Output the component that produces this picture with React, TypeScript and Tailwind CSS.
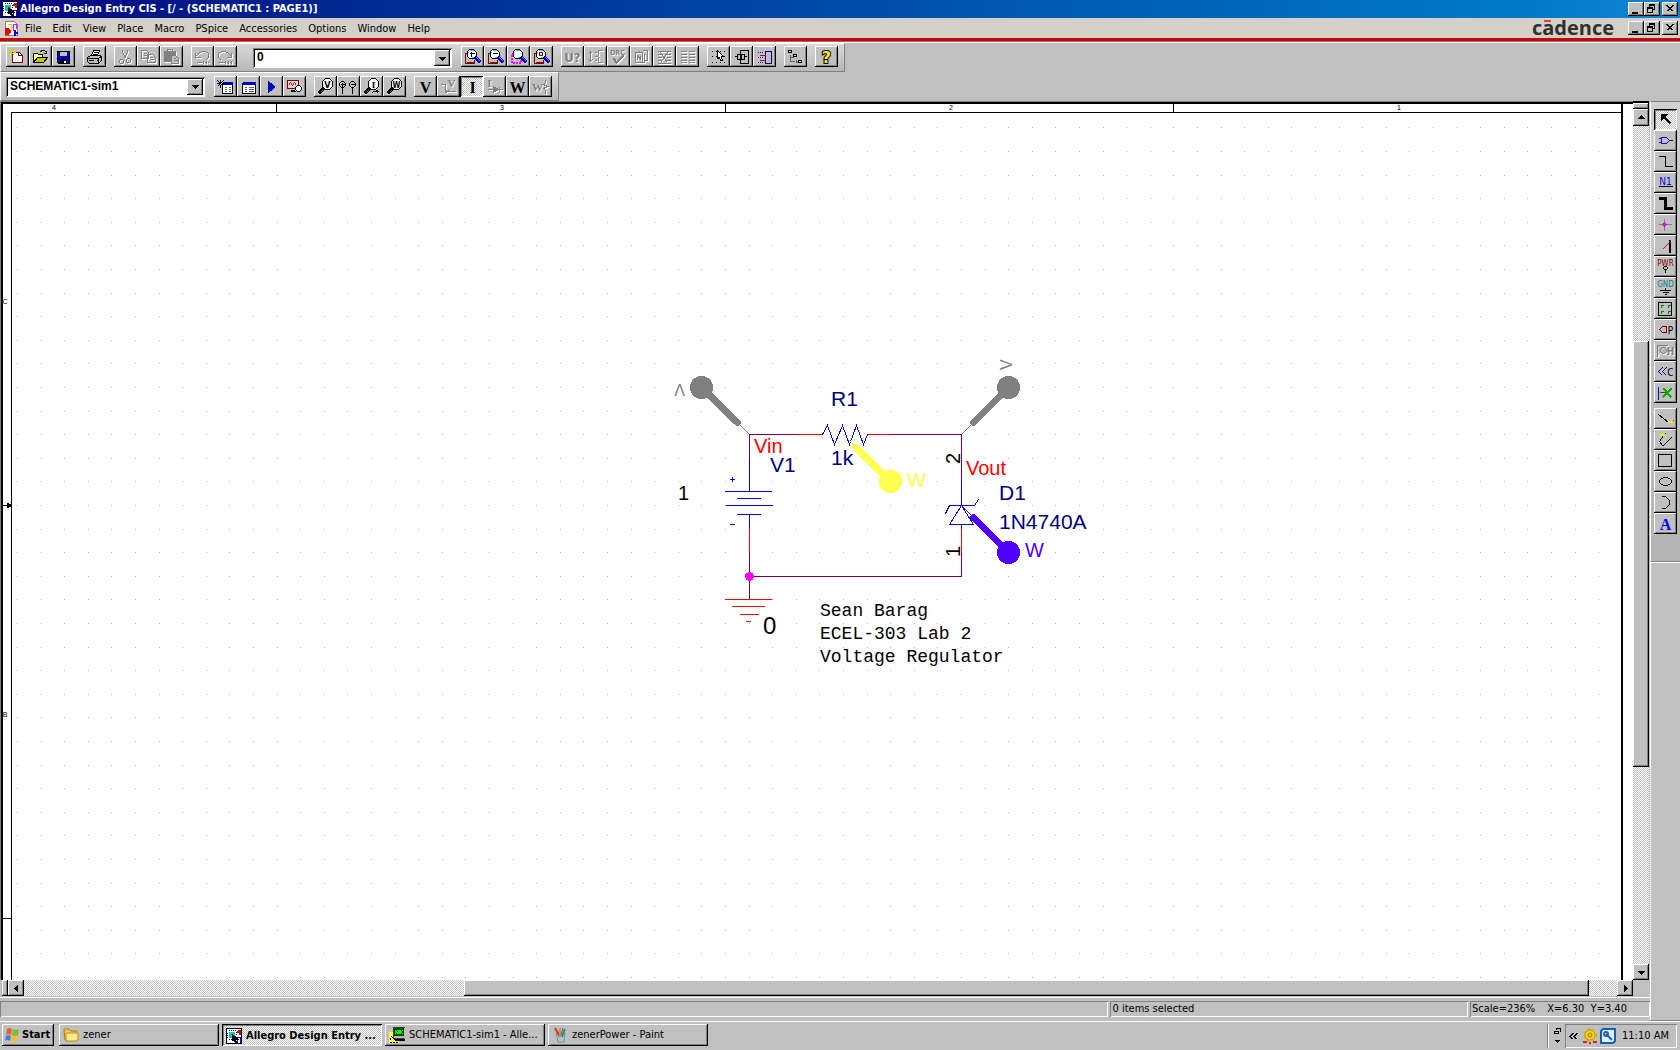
import React from "react";
import type { ReactNode } from "react";

const CHECKER =
  "bg-[repeating-conic-gradient(#ffffff_0_25%,#c0c0c0_0_50%)] bg-[length:2px_2px]";
const RAISED =
  "bg-[#c0c0c0] shadow-[inset_-1px_-1px_0_#000,inset_1px_1px_0_#fff,inset_-2px_-2px_0_#808080]";
const PRESSED =
  "shadow-[inset_1px_1px_0_#000,inset_-1px_-1px_0_#fff,inset_2px_2px_0_#808080]";
const SUNKEN =
  "shadow-[inset_1px_1px_0_#808080,inset_-1px_-1px_0_#fff,inset_2px_2px_0_#000]";
const THIN_SUNKEN = "shadow-[inset_1px_1px_0_#808080,inset_-1px_-1px_0_#fff]";

/* Integer coordinates fall on pixel centres inside this 23x21 icon surface. */
function Icon({ children }: { children: ReactNode }) {
  return (
    <svg
      aria-hidden="true"
      width="23"
      height="21"
      viewBox="-0.5 -0.5 23 21"
      fill="none"
      stroke="#000"
      shapeRendering="crispEdges"
      className="block shrink-0"
    >
      {children}
    </svg>
  );
}

/* Embossed look of an unavailable command. */
function Dim({ children }: { children: ReactNode }) {
  return (
    <>
      <g className="text-white" stroke="currentColor" transform="translate(1 1)">
        {children}
      </g>
      <g className="text-[#808080]" stroke="currentColor">
        {children}
      </g>
    </>
  );
}

type GlyphProps = {
  x: number;
  y: number;
  size: number;
  fill?: string;
  serif?: boolean;
  bold?: boolean;
  children: string;
};

function Glyph({ x, y, size, fill = "currentColor", serif, bold = true, children }: GlyphProps) {
  return (
    <text
      x={x}
      y={y}
      fontSize={size}
      fill={fill}
      stroke="none"
      textAnchor="middle"
      fontWeight={bold ? 700 : 400}
      fontFamily={
        serif ? '"Liberation Serif", serif' : '"DejaVu Sans Condensed", "DejaVu Sans", sans-serif'
      }
    >
      {children}
    </text>
  );
}

type Tool = { label: string; icon: ReactNode; off?: boolean; on?: boolean };

function ToolButton({ label, icon, off, on }: Tool) {
  return (
    <button
      type="button"
      aria-label={label}
      aria-pressed={on}
      disabled={off}
      className={`h-[21px] w-[23px] shrink-0 ${on ? `${CHECKER} ${PRESSED}` : RAISED}`}
    >
      <Icon>{icon}</Icon>
    </button>
  );
}

function Group({ tools, vertical }: { tools: Tool[]; vertical?: boolean }) {
  return (
    <div className={vertical ? "flex flex-col" : "flex"}>
      {tools.map((t) => (
        <ToolButton key={t.label} {...t} />
      ))}
    </div>
  );
}

const Lens = ({ children, page = true }: { children?: ReactNode; page?: boolean }) => (
  <>
    {page && <path d="M7 7H4V17H13V13M5 16H12" stroke="#800000" />}
    <path d="M14 11L19 16" stroke="#0000c0" strokeWidth="3" />
    <path d="M15 11L19 15" stroke="#8080ff" />
    <path d="M8 3H12L15 6V9L12 12H8L6 10V5Z" fill="#fff" />
    <path d="M8 4H12M7 5V6M12 11H10" stroke="#00e0e0" />
    {children}
  </>
);

const Probe = ({ children }: { children: ReactNode }) => (
  <>
    <path d="M9 12L4 17" strokeWidth="3" />
    <path d="M10 12L4 18" stroke="#606060" strokeDasharray="1 1" />
    <path d="M11 2H15L18 5V10L15 13H11L8 10V5Z" fill="#fff" />
    {children}
  </>
);

const Star = ({ x, y, c }: { x: number; y: number; c: string }) => (
  <path
    transform={`translate(${x} ${y})`}
    stroke={c}
    d="M-4 0H-1M1 0H4M0 -4V-1M0 1V4M-3 -3L3 3M-3 3L3 -3"
  />
);

const fileTools: Tool[] = [
  {
    label: "Create document",
    icon: (
      <>
        <path d="M6 6H13L16 9V16H6Z" fill="#fff" stroke="#800000" />
        <path d="M12 6V9H16" stroke="#800000" />
        <Star x={5} y={6} c="#e0d000" />
      </>
    ),
  },
  {
    label: "Open document",
    icon: (
      <>
        <path d="M4 15V7H8L9 8H13V10" fill="#ffff80" />
        <path d="M4 16L8 11H18L14 16Z" fill="#c8c800" />
        <path d="M11 5L13 4H15L17 6M17 4V7H14" />
      </>
    ),
  },
  {
    label: "Save document",
    icon: (
      <>
        <path d="M5 5H17V17H6L5 16Z" fill="#0000c0" />
        <path d="M8 6H14V9H8Z" fill="#c0c0c0" stroke="#c0c0c0" />
        <path d="M8 13H14V16H8Z" fill="#000" />
        <path d="M12 14V16" stroke="#fff" strokeWidth="2" />
      </>
    ),
  },
];

const printTools: Tool[] = [
  {
    label: "Print",
    icon: (
      <>
        <path d="M8 9L10 4H16L14 9Z" fill="#fff" />
        <path d="M10 6H14M9 8H13" />
        <path d="M4 11L7 9H16L18 10V14L15 17H6L4 15Z" fill="#c0c0c0" />
        <path d="M4 12H15L18 10M15 12V17M5 14H14" />
        <path d="M10 14H13" stroke="#e0e000" />
      </>
    ),
  },
];

const editTools: Tool[] = [
  {
    label: "Cut",
    off: true,
    icon: (
      <Dim>
        <path d="M8 3V6L12 12M13 3V6L9 12M6 13H8L9 14V16L8 17H6L5 16V14ZM13 12H15L16 13V15L15 16H13L12 15V13Z" />
      </Dim>
    ),
  },
  {
    label: "Copy",
    off: true,
    icon: (
      <Dim>
        <path d="M4 4H9L11 6V12H4ZM6 7H9M6 9H9M10 8H15L18 11V16H10ZM12 11H15M12 13H16" />
      </Dim>
    ),
  },
  {
    label: "Paste",
    off: true,
    icon: (
      <Dim>
        <path d="M4 5H15V15H4Z" fill="currentColor" />
        <path d="M7 3H12V5H7Z" />
        <path d="M11 9H15L18 12V17H11Z" fill="#c0c0c0" />
        <path d="M13 12H15M13 14H17" />
      </Dim>
    ),
  },
];

const undoTools: Tool[] = [
  {
    label: "Undo",
    off: true,
    icon: (
      <Dim>
        <path d="M4 6V11H9M4 10L8 6L11 5H14L17 7V11L14 14M5 16H11M13 16H14M16 16H17M12 14V17M15 14V17" />
      </Dim>
    ),
  },
  {
    label: "Redo",
    off: true,
    icon: (
      <Dim>
        <path d="M17 6V11H12M17 10L13 6L10 5H7L4 7V11L7 14M4 16H10M12 16H13M15 16H16M11 14V17M14 14V17M17 14V17" />
      </Dim>
    ),
  },
];

const zoomTools: Tool[] = [
  { label: "Zoom in", icon: <Lens><path d="M8 7H13M10 5V10" /></Lens> },
  { label: "Zoom out", icon: <Lens><path d="M8 7H13" /></Lens> },
  {
    label: "Zoom to region",
    icon: (
      <>
        <path d="M4 7H13V16H4Z" stroke="#ff00ff" strokeWidth="2" strokeDasharray="2 1" />
        <Lens page={false} />
      </>
    ),
  },
  { label: "Zoom to all", icon: <Lens><path d="M9 6H12V9H9Z" stroke="#800000" /></Lens> },
];

const processTools: Tool[] = [
  {
    label: "Annotate",
    off: true,
    icon: <Dim><Glyph x={11} y={15} size={13}>U?</Glyph></Dim>,
  },
  {
    label: "Back annotate",
    off: true,
    icon: (
      <Dim>
        <path d="M6 5V15M4 7L6 5L8 7M4 13L6 15L8 13M10 6H12M10 10H12M10 14H12M18 4H14V9L13 10L14 11V16H18" />
      </Dim>
    ),
  },
  {
    label: "Design rules check",
    off: true,
    icon: (
      <Dim>
        <Glyph x={10} y={8} size={7}>DRC</Glyph>
        <path d="M6 12L9 16L16 9" strokeWidth="2" />
      </Dim>
    ),
  },
  {
    label: "Create netlist",
    off: true,
    icon: (
      <Dim>
        <path d="M5 6H12V16H5ZM12 4H17V14H14M9 4V6M14 7V16H12" />
        <path d="M7 13V9L10 13V9" strokeWidth="1" />
      </Dim>
    ),
  },
  {
    label: "Cross reference parts",
    off: true,
    icon: (
      <Dim>
        <path d="M4 5H17M4 8H8M13 8H17M4 11H8M13 11H17M4 14H8M13 14H17M4 17H17" />
        <path d="M7 6L14 16M14 6L7 16" />
      </Dim>
    ),
  },
  {
    label: "Bill of materials",
    off: true,
    icon: (
      <Dim>
        <path d="M4 5H10M12 5H18M4 8H10M12 8H18M4 11H10M12 11H18M4 14H10M12 14H18M4 16H10M12 16H18" />
      </Dim>
    ),
  },
];

const snapTools: Tool[] = [
  {
    label: "Snap to grid",
    icon: (
      <>
        <path d="M4 5H18M4 10H18M4 16H18" strokeDasharray="1 3" />
        <path d="M10 4L16 10H14L15 14H13L12 11L10 12Z" fill="#fff" />
      </>
    ),
  },
  {
    label: "Area select",
    icon: (
      <>
        <path d="M10 4H18V17H10Z" />
        <path d="M7 8H14V13H7ZM4 10H7M14 10H16M11 8V13" />
      </>
    ),
  },
  {
    label: "Drag connected object",
    icon: (
      <>
        <path d="M12 5H18V17H12Z" stroke="#000080" />
        <path d="M6 9H12M6 14H12" stroke="#c00000" />
        <path d="M4 6H10M4 11H10M4 16H10" stroke="#0000ff" strokeDasharray="1 1" />
      </>
    ),
  },
];

const managerTools: Tool[] = [
  {
    label: "Project manager",
    icon: (
      <>
        <path d="M6 8V15H10M6 11H9M12 13V16H15" stroke="#606060" />
        <path d="M4 4H7V6H4ZM9 8H12V10H9ZM14 14H17V16H14Z" fill="#ffff00" />
      </>
    ),
  },
];

const helpTools: Tool[] = [
  {
    label: "Help topics",
    icon: (
      <text
        x="11"
        y="16"
        textAnchor="middle"
        fontSize="16"
        fontWeight="700"
        fontFamily='"DejaVu Sans", sans-serif'
        fill="#ffee00"
        stroke="#000"
        strokeWidth="2"
        paintOrder="stroke"
      >
        ?
      </text>
    ),
  },
];

const SimWindow = ({ x }: { x: number }) => (
  <>
    <path d={`M${x} 7H18V17H${x}Z`} fill="#fff" />
    <path d={`M${x} 7H18`} stroke="#0000c0" strokeWidth="3" />
    <path d={`M${x + 2} 11H${x + 4}M${x + 6} 11H16M${x + 2} 13H${x + 4}M${x + 6} 13H16M${x + 2} 15H${x + 4}M${x + 6} 15H16`} stroke="#606060" />
  </>
);

const simTools: Tool[] = [
  { label: "New simulation profile", icon: <><SimWindow x={8} /><Star x={6} y={7} c="#000" /></> },
  { label: "Edit simulation profile", icon: <SimWindow x={5} /> },
  {
    label: "Run PSpice",
    icon: <path d="M8 5V16L14 11V10Z" fill="#0000d0" stroke="#0000a0" />,
  },
  {
    label: "View simulation results",
    icon: (
      <>
        <path d="M4 4H15V12H4Z" fill="#d8d8d8" stroke="#800000" />
        <path d="M5 9L7 6L9 9L11 6L13 9" stroke="#ff0000" />
        <path d="M8 15L12 14" strokeWidth="2" />
        <path d="M14 9H16L18 11V13L16 15H14L12 13V11Z" fill="#fff" />
      </>
    ),
  },
];

const markerTools: Tool[] = [
  { label: "Voltage level marker", icon: <Probe><Glyph x={13} y={11} size={9} fill="#000">V</Glyph></Probe> },
  {
    label: "Voltage differential markers",
    icon: (
      <>
        <path d="M4 5H6L8 7V9L6 11H4L2 9V7ZM5 11V17M3 8H7M5 6V10" />
        <path d="M14 5H16L18 7V9L16 11H14L12 9V7ZM15 11V17M13 8H17" />
      </>
    ),
  },
  {
    label: "Current marker",
    icon: (
      <Probe>
        <Glyph x={13} y={11} size={9} serif fill="#000">I</Glyph>
        <path d="M11 17L13 15H17M15 13L18 15L16 17" />
      </Probe>
    ),
  },
  { label: "Power dissipation marker", icon: <Probe><Glyph x={13} y={11} size={8} fill="#000">W</Glyph></Probe> },
];

const biasTools: Tool[] = [
  { label: "Enable bias voltage display", icon: <Glyph x={11} y={16} size={16} serif fill="#000">V</Glyph> },
  {
    label: "Toggle voltage on selected net",
    off: true,
    icon: (
      <Dim>
        <Glyph x={14} y={10} size={11} serif>V</Glyph>
        <path d="M3 8H8V15H18M12 13L10 15" />
        <path d="M7 15H9" strokeWidth="3" />
      </Dim>
    ),
  },
  { label: "Enable bias current display", on: true, icon: <Glyph x={12} y={16} size={16} serif fill="#000">I</Glyph> },
  {
    label: "Toggle current on selected part",
    off: true,
    icon: (
      <Dim>
        <Glyph x={6} y={10} size={11} serif>I</Glyph>
        <path d="M4 13H19M16 10V16" />
        <path d="M10 10V16L15 13Z" fill="currentColor" />
      </Dim>
    ),
  },
  { label: "Enable bias power display", icon: <Glyph x={11} y={16} size={16} serif fill="#000">W</Glyph> },
  {
    label: "Toggle power on selected part",
    off: true,
    icon: (
      <Dim>
        <Glyph x={8} y={14} size={11} serif>W</Glyph>
        <path d="M16 3V6L14 8L18 10L14 12L16 14V17" />
      </Dim>
    ),
  },
];

const drawTools: Tool[] = [
  {
    label: "Select",
    on: true,
    icon: <><path d="M7 5H13L7 11Z" fill="#000" /><path d="M9 7L16 14" strokeWidth="2" /></>,
  },
  {
    label: "Place part",
    icon: (
      <>
        <path d="M4 8H7M4 12H7M15 10H18" stroke="#800000" />
        <path d="M7 7H12L15 10L12 13H7Z" stroke="#0000ff" />
      </>
    ),
  },
  { label: "Place wire", icon: <path d="M4 5H11V15H18" /> },
  {
    label: "Place net alias",
    icon: <><Glyph x={11} y={12} size={10} bold={false} fill="#0000ff">N1</Glyph><path d="M4 14H18" /></>,
  },
  { label: "Place bus", icon: <path d="M4 5H11V15H18" strokeWidth="3" /> },
  {
    label: "Place junction",
    icon: (
      <>
        <path d="M4 10H17M10 4V16" stroke="#808080" />
        <path d="M8 10L10 8L12 10L10 12Z" fill="#ff00ff" stroke="#c000c0" />
      </>
    ),
  },
  {
    label: "Place bus entry",
    icon: <><path d="M8 14L14 8" stroke="#ff0000" /><path d="M15 4V17" strokeWidth="2" /></>,
  },
  {
    label: "Place power",
    icon: <><Glyph x={11} y={9} size={8} bold={false} fill="#800000">PWR</Glyph><path d="M10 10H12L13 11V12L12 13H10L9 12V11ZM11 13V16" /></>,
  },
  {
    label: "Place ground",
    icon: <><Glyph x={11} y={9} size={8} bold={false} fill="#008080">GND</Glyph><path d="M11 10V13M5 13H16M8 15H14M10 17H12" /></>,
  },
  {
    label: "Place hierarchical block",
    icon: (
      <>
        <path d="M4 4H17V17H4Z" />
        <path d="M6 7H9M7 6V9M13 7H16M14 6V9M6 13H9M7 12V15M13 13H16M14 12V15" stroke="#008000" />
      </>
    ),
  },
  {
    label: "Place port",
    icon: <><path d="M5 10L8 7H12V13H8Z" stroke="#800000" /><Glyph x={16} y={14} size={10} bold={false} fill="#000">P</Glyph></>,
  },
  {
    label: "Place pin",
    off: true,
    icon: (
      <Dim>
        <path d="M3 16V5H13M5 10L8 7H10L13 10L10 13H8Z" fill="currentColor" fillOpacity="0.4" />
        <Glyph x={16} y={14} size={10}>H</Glyph>
      </Dim>
    ),
  },
  {
    label: "Place off-page connector",
    icon: <><path d="M8 6L4 10L8 14M12 6L8 10L12 14" stroke="#0000a0" /><Glyph x={16} y={14} size={10} bold={false} fill="#000">C</Glyph></>,
  },
  {
    label: "Place no connect",
    icon: (
      <>
        <path d="M4 4V17" stroke="#0000ff" />
        <path d="M5 10H12" stroke="#c00000" />
        <path d="M9 6L17 15M17 6L8 15" stroke="#00b000" strokeWidth="2" />
      </>
    ),
  },
];

const Pencil = ({ x, y }: { x: number; y: number }) => (
  <g transform={`translate(${x} ${y})`}>
    <path d="M-2 1L2 0" stroke="#ffee00" strokeWidth="2" />
    <path d="M2 -1H3" stroke="#ff0000" />
  </g>
);

const shapeTools: Tool[] = [
  { label: "Place line", icon: <><path d="M4 6L14 14" /><Pencil x={16} y={13} /></> },
  { label: "Place polyline", icon: <><path d="M9 6L5 12L8 16H9L17 8" /><Pencil x={8} y={5} /></> },
  { label: "Place rectangle", icon: <path d="M4 4H17V16H4Z" /> },
  { label: "Place ellipse", icon: <ellipse cx="11" cy="10" rx="6" ry="4" /> },
  { label: "Place arc", icon: <path d="M7 4H11L15 8V12L11 16H7" /> },
  { label: "Place text", icon: <Glyph x={11} y={16} size={16} serif fill="#0000ff">A</Glyph> },
];

function WindowButtons() {
  const box = `flex h-[14px] w-4 items-center justify-center ${RAISED}`;
  return (
    <div className="flex items-center">
      <button type="button" aria-label="Minimize" className={box}>
        <svg aria-hidden="true" width="16" height="14" shapeRendering="crispEdges">
          <path d="M4 10H10V12H4Z" />
        </svg>
      </button>
      <button type="button" aria-label="Restore" className={box}>
        <svg aria-hidden="true" width="16" height="14" viewBox="-0.5 -0.5 16 14" fill="none" stroke="#000" shapeRendering="crispEdges">
          <path d="M5 4V2H10V7H8M5 3H10M3 5H8V10H3ZM3 6H8" />
        </svg>
      </button>
      <button type="button" aria-label="Close" className={`ml-0.5 ${box}`}>
        <svg aria-hidden="true" width="16" height="14" viewBox="-0.5 -0.5 16 14" stroke="#000" shapeRendering="crispEdges">
          <path d="M4 3L10 9M5 3L11 9M10 3L4 9M11 3L5 9" />
        </svg>
      </button>
    </div>
  );
}

function AppGlyph() {
  return (
    <svg aria-hidden="true" width="16" height="16" viewBox="-0.5 -0.5 16 16" fill="none" shapeRendering="crispEdges" className="shrink-0">
      <path d="M0 0H15V15H0Z" fill="#fff" stroke="#000" />
      <path d="M3 4H8V9H3Z" fill="#00c8c8" stroke="#00c8c8" />
      <path d="M2 2H9M2 11H6M1 4V9M10 3V6" stroke="#000" strokeDasharray="1 1" />
      <path d="M10 3H13V6M11 2H14" stroke="#e00000" strokeWidth="2" />
      <path d="M14 14V9H11V14" stroke="#0000ff" />
      <path d="M6 6L12 11L9 11L10 14L8 13L7 11L6 12Z" fill="#000" stroke="#000" />
    </svg>
  );
}

function DocGlyph() {
  return (
    <svg aria-hidden="true" width="16" height="16" viewBox="-0.5 -0.5 16 16" fill="none" shapeRendering="crispEdges" className="shrink-0">
      <path d="M2 1H11L14 4V15H2Z" fill="#fff" stroke="#808080" />
      <path d="M2 8H5L7 10V12L5 14H2Z" fill="#f00000" stroke="#f00000" />
      <path d="M4 4H8V9M8 7H10" stroke="#e0d000" />
      <path d="M10 3V10M10 4H13V8" stroke="#ff00ff" />
      <path d="M11 9V15M11 12H14" stroke="#0000ff" strokeWidth="2" />
    </svg>
  );
}

function Combo({ label, value, className }: { label: string; value: string; className: string }) {
  return (
    <div className={`relative h-5 bg-white ${SUNKEN} ${className}`}>
      <select
        aria-label={label}
        defaultValue={value}
        className="block size-full appearance-none bg-transparent pr-5 pb-0.5 pl-1 font-['Liberation_Sans',Arial,sans-serif] text-xs leading-[18px] font-bold outline-none"
      >
        <option>{value}</option>
      </select>
      <span className={`pointer-events-none absolute top-0.5 right-0.5 flex h-4 w-4 items-center justify-center ${RAISED}`}>
        <Arrow dir="down" />
      </span>
    </div>
  );
}

function Arrow({ dir }: { dir: "up" | "down" | "left" | "right" }) {
  const d = {
    up: "M0 5H7V4H6V3H5V2H4V1H3V2H2V3H1V4H0Z",
    down: "M0 2H7V3H6V4H5V5H4V6H3V5H2V4H1V3H0Z",
    left: "M5 0V7H4V6H3V5H2V4H1V3H2V2H3V1H4V0Z",
    right: "M2 0V7H3V6H4V5H5V4H6V3H5V2H4V1H3V0Z",
  }[dir];
  return (
    <svg aria-hidden="true" width="7" height="7" shapeRendering="crispEdges">
      <path d={d} />
    </svg>
  );
}

const menus = ["File", "Edit", "View", "Place", "Macro", "PSpice", "Accessories", "Options", "Window", "Help"];

const BAR = "bg-linear-to-b from-[#d8d8d8] to-[#b8b8b8] border-t border-l border-t-white border-l-white border-r border-b border-r-[#808080] border-b-[#808080]";

function Marker({ cx, cy, tx, ty, px, py, color }: { cx: number; cy: number; tx: number; ty: number; px: number; py: number; color: string }) {
  return (
    <g stroke={color} fill={color}>
      <path d={`M${cx} ${cy}L${tx} ${ty}`} strokeWidth="7" strokeLinecap="round" />
      <path d={`M${tx} ${ty}L${px} ${py}`} />
      <circle cx={cx} cy={cy} r="11" />
    </g>
  );
}

const SPACING = 23.6;
const dotRow = Array.from({ length: 68 }, (_, i) => `M${Math.round(17 + i * SPACING)} 0h1`).join("");

function Schematic() {
  const name = { fill: "#000080", fontSize: 21 };
  const net = { fill: "#ff0000", fontSize: 20 };
  return (
    <svg
      role="img"
      aria-label="Schematic page"
      className="block size-full bg-white font-['Liberation_Sans',Arial,sans-serif]"
      fill="none"
    >
      <g transform="translate(0.5 -100.5)" shapeRendering="crispEdges">
        <g transform="translate(-0.5 0)" stroke="#b4b4b4">
          {Array.from({ length: 37 }, (_, r) => (
            <path key={r} d={dotRow} transform={`translate(0 ${Math.round(127.3 + r * SPACING)})`} />
          ))}
        </g>
        <g stroke="#000" strokeLinecap="square">
          <path d="M0 101V1000" stroke="#808080" />
          <path d="M0 101H1633" stroke="#808080" />
          <path d="M1 102H1633M1 103H1633M1 102V1000M2 102V1000" />
          <path d="M11 112H1622M11 112V1000M1621 103V1000M1622 103V1000" />
          <path d="M276 104V112M725 104V112M1173 104V112M3 918H11M3 505H11" />
          <path d="M7 503V507M8 503V507M9 504V506M10 504V506" />
        </g>
        <g strokeLinecap="square">
          <g stroke="#800040">
            <path d="M749 434H796M890 434H961V482M749 434V458M749 552V599M749 576H961V552" />
          </g>
          <g stroke="#ff0000">
            <path d="M797 434H822M867 434H890M749 529V552M961 529V552" />
            <path d="M725 599H771M732 606H764M740 614H758M746 621H750" />
          </g>
          <g stroke="#0000ff">
            <path d="M822 434L827 425L834 444L842 425L849 444L856 425L863 444L867 434" />
            <path d="M749 458V491M725 491H771M737 498H760M726 505H772M737 514H760M749 514V528" />
            <path d="M730 479H734M732 477V481M730 524H734" />
            <path d="M961 482V505L949 524H973L961 505M945 513L949 505H974L978 499M961 524V528" />
          </g>
        </g>
        <circle cx="749" cy="576" r="4" fill="#ff00ff" stroke="#ff00ff" />
        <Marker cx={701} cy={387} tx={737} ty={422} px={749} py={434} color="#808080" />
        <Marker cx={1008} cy={387} tx={973} ty={422} px={961} py={434} color="#808080" />
        <Marker cx={890} cy={481} tx={855} ty={447} px={850} py={441} color="#ffff50" />
        <Marker cx={1008} cy={552} tx={973} ty={517} px={961} py={505} color="#5000ff" />
      </g>
      <g transform="translate(0 -101)">
        <g fill="#000" fontSize="7" textAnchor="middle">
          <text x="54" y="110">4</text>
          <text x="502" y="110">3</text>
          <text x="951" y="110">2</text>
          <text x="1399" y="110">1</text>
          <text x="5" y="304">C</text>
          <text x="5" y="717">B</text>
        </g>
        <text x="831" y="406" {...name}>R1</text>
        <text x="831" y="465" {...name}>1k</text>
        <text x="770" y="472" {...name}>V1</text>
        <text x="999" y="500" {...name}>D1</text>
        <text x="999" y="529" {...name}>1N4740A</text>
        <text x="754" y="453" {...net}>Vin</text>
        <text x="966" y="475" {...net}>Vout</text>
        <g fill="#000" fontSize="20">
          <text x="678" y="500">1</text>
          <text x="763" y="634" fontSize="24">0</text>
          <text transform="translate(960 464) rotate(-90)">2</text>
          <text transform="translate(960 557) rotate(-90)">1</text>
        </g>
        <g fontSize="20">
          <text x="907" y="487" fill="#ffff50">W</text>
          <text x="1025" y="557" fill="#5000ff">W</text>
          <text transform="translate(685 384) rotate(180)" fill="#808080" fontSize="16">V</text>
          <text transform="translate(1012 370) rotate(-90)" fill="#808080" fontSize="16">V</text>
        </g>
        <g fill="#000" fontSize="18" fontFamily='"Liberation Mono", "Courier New", monospace'>
          <text x="820" y="616">Sean Barag</text>
          <text x="820" y="639">ECEL-303 Lab 2</text>
          <text x="820" y="662">Voltage Regulator</text>
        </g>
      </g>
    </svg>
  );
}

const SCROLL_BTN = `flex w-4 shrink-0 items-center justify-center ${RAISED}`;

function VerticalScroll() {
  return (
    <div className="mr-px flex w-4 shrink-0 flex-col border-t-2 border-black">
      <div className={`h-1.5 shrink-0 ${RAISED}`} />
      <button type="button" aria-label="Scroll up" className={`h-[17px] ${SCROLL_BTN}`}>
        <Arrow dir="up" />
      </button>
      <div className={`flex min-h-0 flex-1 flex-col ${CHECKER}`}>
        <div className="grow-[215] basis-0" />
        <div className={`grow-[426] basis-0 ${RAISED}`} />
        <div className="grow-[197] basis-0" />
      </div>
      <button type="button" aria-label="Scroll down" className={`h-4 ${SCROLL_BTN}`}>
        <Arrow dir="down" />
      </button>
    </div>
  );
}

function HorizontalScroll() {
  return (
    <div className="flex h-4 shrink-0 bg-[#c0c0c0] pl-0.5">
      <div className={`w-1.5 shrink-0 ${RAISED}`} />
      <button type="button" aria-label="Scroll left" className={`h-4 ${SCROLL_BTN}`}>
        <Arrow dir="left" />
      </button>
      <div className={`flex min-w-0 flex-1 ${CHECKER}`}>
        <div className="grow-[440] basis-0" />
        <div className={`grow-[1125] basis-0 ${RAISED}`} />
        <div className="grow-[28] basis-0" />
      </div>
      <button type="button" aria-label="Scroll right" className={`h-4 ${SCROLL_BTN}`}>
        <Arrow dir="right" />
      </button>
      <div className="w-[17px] shrink-0" />
    </div>
  );
}

function StatusBar() {
  return (
    <footer className="mt-[3px] mb-1 flex h-4 shrink-0 gap-0.5 text-[11px] leading-4">
      <div className={`grow-[1110] basis-0 ${THIN_SUNKEN}`} />
      <div className={`grow-[356] basis-0 pl-0.5 ${THIN_SUNKEN}`}>0 items selected</div>
      <div className={`flex w-[180px] gap-3 pl-0.5 whitespace-pre ${THIN_SUNKEN}`}>
        <span>Scale=236%</span>
        <span>X=6.30  Y=3.40</span>
      </div>
    </footer>
  );
}

function StartFlag() {
  return (
    <svg aria-hidden="true" width="16" height="16" viewBox="0 0 16 16" className="shrink-0">
      <path d="M3 2Q5 0 8 2L7 8Q4 6 2 8Z" fill="#e8602c" />
      <path d="M9 2Q12 4 15 2L14 8Q11 10 8 8Z" fill="#7cbc28" />
      <path d="M2 9Q4 7 7 9L6 14Q3 12 1 14Z" fill="#4a7ce0" />
      <path d="M8 9Q11 11 14 9L13 14Q10 16 7 14Z" fill="#f4c020" />
    </svg>
  );
}

function FolderGlyph() {
  return (
    <svg aria-hidden="true" width="16" height="16" viewBox="0 0 16 16" className="shrink-0">
      <path d="M1 3Q1 2 2 2H6L8 4H13Q14 4 14 5V13H2Z" fill="#f0c84c" stroke="#a87c10" />
      <path d="M3 6H15V12Q15 14 13 14H3Z" fill="#ffe88c" stroke="#b88c18" />
    </svg>
  );
}

function SimGlyph() {
  return (
    <svg aria-hidden="true" width="16" height="16" viewBox="0 0 16 16" shapeRendering="crispEdges" className="shrink-0">
      <path d="M0 5H10V16H0Z" fill="#ffff40" />
      <path d="M1 13L3 9L5 13L7 9L9 14M1 15H9" fill="none" stroke="#000" strokeDasharray="2 1" />
      <path d="M4 0H16V11H4Z" fill="#c0c0c0" stroke="#404040" />
      <path d="M5 1H15V9H5Z" fill="#004000" />
      <path d="M6 3L9 7L11 3L14 7M6 7L9 3L11 7L14 3" fill="none" stroke="#00ff00" />
      <path d="M6 12H16V14H6Z" fill="#000" />
    </svg>
  );
}

function PaintGlyph() {
  return (
    <svg aria-hidden="true" width="16" height="16" viewBox="0 0 16 16" className="shrink-0">
      <path d="M4 6H13L12 15H6Z" fill="#a8c4d8" stroke="#7890a0" />
      <path d="M3 1L8 10" stroke="#c04020" strokeWidth="2" />
      <path d="M8 1V10" stroke="#e09030" strokeWidth="2" />
      <path d="M13 2L10 10" stroke="#30905c" strokeWidth="2" />
      <path d="M11 1L9 8" stroke="#3060c0" />
    </svg>
  );
}

const tasks = [
  { title: "zener", icon: <FolderGlyph /> },
  { title: "Allegro Design Entry ...", icon: <AppGlyph />, active: true },
  { title: "SCHEMATIC1-sim1 - Alle...", icon: <SimGlyph /> },
  { title: "zenerPower - Paint", icon: <PaintGlyph /> },
];

function TaskBar() {
  return (
    <nav aria-label="Taskbar" className="flex h-[29px] shrink-0 items-start border-t border-white pt-0.5 pr-[3px] pl-0.5 text-[11px]">
      <button type="button" className={`mr-[5px] flex h-[22px] w-[52px] items-center gap-0.5 pl-0.5 text-[11px] font-bold ${RAISED}`}>
        <StartFlag />
        Start
      </button>
      <div className="flex min-w-0 flex-1 gap-[3px]">
        {tasks.map((t) => (
          <button
            key={t.title}
            type="button"
            className={`flex h-[22px] w-40 items-center gap-1 overflow-hidden pr-1 pl-1 whitespace-nowrap ${
              t.active ? `${CHECKER} ${PRESSED} pt-0.5 font-bold` : RAISED
            }`}
          >
            {t.icon}
            <span>{t.title}</span>
          </button>
        ))}
      </div>
      <div className="flex h-6 shrink-0 items-center border-l border-[#808080]">
        <div className="flex h-6 w-[17px] items-center justify-center border-l border-white">
          <svg aria-hidden="true" width="9" height="18" viewBox="-0.5 -0.5 9 18" fill="none" stroke="#000" shapeRendering="crispEdges">
            <path d="M3 2V1H7V4H6M1 4H5V6H1Z" />
            <path d="M2 13H6L4 15Z" fill="#000" />
          </svg>
        </div>
        <div className={`flex h-6 w-28 items-center pl-1 whitespace-nowrap ${THIN_SUNKEN}`}>
          <svg aria-hidden="true" width="9" height="7" viewBox="-0.5 -0.5 9 7" fill="none" stroke="#000" shapeRendering="crispEdges">
            <path d="M3 0L0 3L3 6M4 0L1 3L4 6M7 0L4 3L7 6M8 0L5 3L8 6" />
          </svg>
          <svg aria-hidden="true" width="16" height="16" viewBox="0 0 16 16" className="ml-1 shrink-0">
            <circle cx="8" cy="7" r="5" fill="#ffd800" stroke="#b88800" />
            <circle cx="8" cy="7" r="6" fill="none" stroke="#e0b000" strokeWidth="2" strokeDasharray="2 3" />
            <circle cx="8" cy="7" r="2" fill="#c0c0c0" stroke="#a07800" />
            <path d="M1 14H5M7 15H9M11 14H15" stroke="#e02020" strokeWidth="2" />
          </svg>
          <svg aria-hidden="true" width="16" height="16" viewBox="0 0 16 16" className="ml-0.5 shrink-0">
            <path d="M1 3L3 1H15V13L13 15H1Z" fill="#e8f2fc" stroke="#1060b8" strokeWidth="2" />
            <path d="M6 6L12 12" stroke="#1868c0" strokeWidth="2" />
            <circle cx="6" cy="6" r="2" fill="none" stroke="#1868c0" strokeWidth="2" />
          </svg>
          <time className="ml-1.5">11:10 AM</time>
        </div>
      </div>
    </nav>
  );
}

export default function App() {
  return (
    <div className="flex h-screen flex-col overflow-hidden bg-[#c0c0c0] font-['DejaVu_Sans_Condensed','DejaVu_Sans',sans-serif] text-black">
      <header className="shrink-0">
        <div className="flex h-[18px] items-center justify-between bg-linear-to-r from-[#000080] to-[#1084d0] pr-0.5 pl-0.5">
          <div className="flex items-center gap-0.5">
            <AppGlyph />
            <h1 className="text-[11px] leading-4 font-bold text-white">
              Allegro Design Entry CIS - [/ - (SCHEMATIC1 : PAGE1)]
            </h1>
          </div>
          <WindowButtons />
        </div>
        <div className="flex h-5 items-center justify-between bg-[#d4d0c8] pr-0.5 pl-[3px]">
          <div className="flex items-center">
            <DocGlyph />
            <nav aria-label="Main menu" className="flex pt-0.5 text-[11px] leading-[18px]">
              {menus.map((m) => (
                <button key={m} type="button" className="pr-[5px] pl-1.5">
                  {m}
                </button>
              ))}
            </nav>
          </div>
          <div className="flex items-center gap-3.5">
            <span className="relative font-['Open_Sans',sans-serif] text-[20px] leading-5 font-bold text-[#303030]">
              cadence
              <span className="absolute top-0.5 left-3 h-0.5 w-[7px] bg-[#e04040]" />
            </span>
            <WindowButtons />
          </div>
        </div>
        <div className="h-1 border-b border-b-[#808080] bg-[#d00000]" />
      </header>

      <div className="shrink-0 border-t border-white">
        <div role="toolbar" aria-label="Capture" className={`flex h-[29px] w-fit items-start gap-2 pt-0.5 pr-1.5 pl-[5px] ${BAR}`}>
          <Group tools={fileTools} />
          <Group tools={printTools} />
          <Group tools={editTools} />
          <Group tools={undoTools} />
          <Combo label="Part" value="0" className="mt-0.5 mr-px ml-2 w-[199px]" />
          <Group tools={zoomTools} />
          <Group tools={processTools} />
          <Group tools={snapTools} />
          <Group tools={managerTools} />
          <Group tools={helpTools} />
        </div>
        <div role="toolbar" aria-label="PSpice" className={`flex h-[29px] w-fit items-center gap-2 pr-1.5 pl-[5px] ${BAR}`}>
          <Combo label="Simulation profile" value="SCHEMATIC1-sim1" className="mr-px w-[199px]" />
          <Group tools={simTools} />
          <Group tools={markerTools} />
          <Group tools={biasTools} />
        </div>
      </div>

      <div className="flex min-h-0 flex-1">
        <div className="flex min-w-0 flex-1 flex-col">
          <main className="flex min-h-0 flex-1">
            <div className="min-w-0 flex-1 overflow-hidden">
              <Schematic />
            </div>
            <VerticalScroll />
          </main>
          <HorizontalScroll />
          <div className="mt-px h-px shrink-0 bg-white" />
          <StatusBar />
        </div>
        <aside className="flex w-[30px] shrink-0 flex-col border-b border-[#808080]">
          <div role="toolbar" aria-label="Draw" className="flex h-[461px] flex-col items-start gap-[5px] border-t border-b border-l border-t-[#808080] border-b-[#808080] border-l-white bg-linear-to-b from-[#d0d0d0] to-[#b4b4b4] pt-[7px] pl-[3px]">
            <Group tools={drawTools} vertical />
            <Group tools={shapeTools} vertical />
          </div>
          <div className="flex-1 border-t border-l border-white" />
        </aside>
      </div>
      <TaskBar />
    </div>
  );
}
